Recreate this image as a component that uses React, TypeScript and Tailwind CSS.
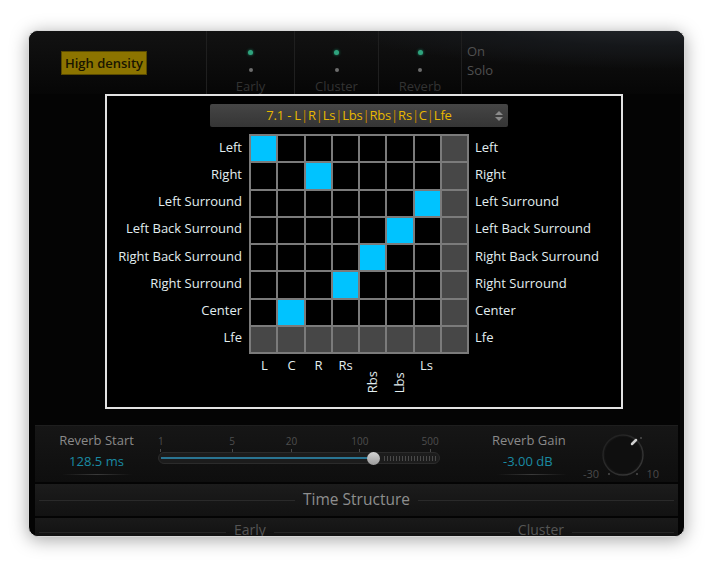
import React from 'react'

const ROWS = ['Left', 'Right', 'Left Surround', 'Left Back Surround', 'Right Back Surround', 'Right Surround', 'Center', 'Lfe']
// column index of the lit cell for each row, -1 for none
const ACTIVE = [0, 2, 6, 5, 4, 3, 1, -1]
const COLS = ['L', 'C', 'R', 'Rs', 'Rbs', 'Lbs', 'Ls', '']
const ROTATED = ['Rbs', 'Lbs']
const FORMAT = ['L', 'R', 'Ls', 'Lbs', 'Rbs', 'Rs', 'C', 'Lfe']

const font = { fontFamily: '"Open Sans", "Noto Sans", sans-serif' }

function Led({ on }: { on: boolean }) {
  return on ? (
    <span className="block w-[5px] h-[5px] rounded-full bg-[#2fa37e] shadow-[0_0_3px_#1f8f6a]" />
  ) : (
    <span className="block w-[4px] h-[4px] rounded-full bg-[#6d6d6d]" />
  )
}

function LedColumn({ label, width }: { label: string; width: string }) {
  return (
    <div className={`${width} h-full border-l border-[#1f1f1f] flex flex-col items-center pt-[19px]`}>
      <Led on />
      <div className="h-[13px]" />
      <Led on={false} />
      <div className="mt-[8px] text-[13px] leading-none text-[#333]">{label}</div>
    </div>
  )
}

function Matrix() {
  return (
    <div className="w-[220px] h-[220px] grid grid-cols-8 grid-rows-8 gap-[2px] p-[2px] bg-[#7b7b7b]">
      {ROWS.map((_, r) =>
        COLS.map((_, c) => {
          const lit = ACTIVE[r] === c
          const dead = r === 7 || c === 7
          return (
            <div
              key={`${r}-${c}`}
              className={lit ? 'bg-[#00c3ff]' : dead ? 'bg-[#474747]' : 'bg-black'}
            />
          )
        })
      )}
    </div>
  )
}

function Dialog() {
  return (
    <div className="ml-[76px] w-[518px] h-[315px] border-2 border-[#e2e2e2] bg-black flex flex-col">
      <div className="ml-[103px] mt-[8px] w-[298px] h-[23px] rounded-[2px] bg-gradient-to-b from-[#454545] to-[#353535] flex items-center pl-[18px]">
        <div className="flex-1 text-center text-[13px] leading-none tracking-[-0.2px] text-[#e8b800]">
          7.1 -{' '}
          {FORMAT.map((f, i) => (
            <span key={f}>
              {f}
              {i < FORMAT.length - 1 && <span className="text-[#c98a00]">|</span>}
            </span>
          ))}
        </div>
        <div className="w-[18px] flex flex-col items-center gap-[2px]">
          <span className="w-0 h-0 border-l-[4px] border-r-[4px] border-b-[4px] border-l-transparent border-r-transparent border-b-[#8a8a8a]" />
          <span className="w-0 h-0 border-l-[4px] border-r-[4px] border-t-[4px] border-l-transparent border-r-transparent border-t-[#8a8a8a]" />
        </div>
      </div>

      <div className="mt-[7px] flex">
        <div className="w-[135px] h-[220px] grid grid-rows-8 pb-[3px]">
          {ROWS.map((r) => (
            <div key={r} className="flex items-center justify-end text-[13px] text-[#e2eef0] leading-none">
              {r}
            </div>
          ))}
        </div>
        <div className="ml-[7px]">
          <Matrix />
          <div className="grid grid-cols-8 w-[220px] px-[2px] pt-[5px]">
            {COLS.map((c, i) =>
              ROTATED.includes(c) ? (
                <div key={i} className="flex justify-center pt-[12px]">
                  <span className="[writing-mode:vertical-rl] rotate-180 text-[13px] leading-none text-[#e2eef0]">{c}</span>
                </div>
              ) : (
                <div key={i} className="text-center text-[13px] leading-none text-[#e2eef0]">{c}</div>
              )
            )}
          </div>
        </div>
        <div className="ml-[6px] h-[220px] grid grid-rows-8 pb-[3px]">
          {ROWS.map((r) => (
            <div key={r} className="flex items-center text-[13px] text-[#e2eef0] leading-none">
              {r}
            </div>
          ))}
        </div>
      </div>
    </div>
  )
}

function Tick({ t }: { t: string }) {
  return (
    <div className="w-[20px] flex flex-col items-center">
      <span>{t}</span>
      <span className="mt-[3px] w-px h-[3px] bg-[#4a4a4a]" />
    </div>
  )
}

function Slider() {
  return (
    <div className="w-[282px] pt-[10px]">
      <div className="flex h-[16px] text-[10px] leading-none text-[#4e4e4e]">
        <div className="-ml-[7px]" />
        <Tick t="1" />
        <div className="w-[52px]" />
        <Tick t="5" />
        <div className="w-[40px]" />
        <Tick t="20" />
        <div className="w-[49px]" />
        <Tick t="100" />
        <div className="w-[51px]" />
        <Tick t="500" />
      </div>
      <div className="h-[12px] rounded-full bg-[#1c1c1c] border border-[#2b2b2b] flex items-center px-[2px]">
        <div className="w-[207px] h-[2px] bg-[#2a7593]" />
        <div className="w-[13px] h-[13px] -ml-[1px] rounded-full bg-gradient-to-b from-[#d4d4d4] to-[#9a9a9a]" />
        <div className="ml-[4px] flex-1 h-[5px] bg-[repeating-linear-gradient(90deg,#4a4a4a_0px,#4a4a4a_1px,transparent_1px,transparent_3px)]" />
      </div>
    </div>
  )
}

function Knob() {
  return (
    <div className="w-[80px] pt-[8px]">
      <svg width="56" height="50" viewBox="0 0 56 50" className="ml-[12px]">
        <defs>
          <linearGradient id="rim" x1="0" y1="0" x2="1" y2="1">
            <stop offset="0" stopColor="#1e1e1e" />
            <stop offset="1" stopColor="#3a3a3a" />
          </linearGradient>
        </defs>
        <circle cx="28" cy="21" r="20" fill="#141414" stroke="url(#rim)" strokeWidth="1.4" />
        <circle cx="28" cy="21" r="18" fill="#0f0f0f" />
        <line x1="37" y1="10" x2="41" y2="6" stroke="#d0d0d0" strokeWidth="2.5" strokeLinecap="round" />
        <circle cx="46" cy="4" r="0.8" fill="#777" />
        <circle cx="14" cy="40" r="0.8" fill="#777" />
        <circle cx="42" cy="40" r="0.8" fill="#777" />
      </svg>
      <div className="-mt-[16px] w-[76px] flex justify-between text-[11px] leading-none text-[#4a4a4a]">
        <span>-30</span>
        <span>10</span>
      </div>
    </div>
  )
}

export default function App() {
  return (
    <div className="w-[713px] h-[569px] bg-white pt-[30px] pl-[28px]" style={font}>
      <div className="w-[657px] h-[507px] rounded-[10px] overflow-hidden bg-[#040404] border border-[#d8d8d8] shadow-[0_3px_18px_rgba(0,0,0,0.35)] flex flex-col">
        {/* top bar */}
        <div className="h-[63px] shrink-0 flex bg-[radial-gradient(ellipse_70%_120%_at_95%_-30%,#2c3035_0%,#15171a_45%,transparent_75%),linear-gradient(#121212,#060606)] overflow-hidden">
          <div className="w-[177px] pl-[32px] pt-[20px]">
            <div className="w-[86px] h-[24px] bg-[#8c7400] border border-[#5a4b00] flex items-center justify-center text-[13px] font-semibold leading-none text-[#191600]">
              High density
            </div>
          </div>
          <LedColumn label="Early" width="w-[88px]" />
          <LedColumn label="Cluster" width="w-[84px]" />
          <LedColumn label="Reverb" width="w-[83px]" />
          <div className="border-l border-[#1f1f1f] pl-[5px] pt-[14px] flex flex-col gap-[6px] text-[13px] leading-none text-[#505050]">
            <span>On</span>
            <span>Solo</span>
          </div>
        </div>

        {/* output matrix */}
        <div className="h-[331px] shrink-0">
          <Dialog />
        </div>

        {/* reverb controls */}
        <div className="h-[57px] shrink-0 mx-[6px] border-t border-[#1e1e1e] bg-gradient-to-b from-[#161616] to-[#0e0e0e] flex">
          <div className="w-[123px] flex flex-col items-center pt-[8px]">
            <div className="text-[13px] leading-none text-[#8a8a8a]">Reverb Start</div>
            <div className="mt-[8px] text-[13px] leading-none text-[#1a8aa3]">128.5 ms</div>
            <div className="mt-[6px] w-[70px] h-px bg-gradient-to-r from-transparent via-[#3a3a3a] to-transparent" />
          </div>
          <Slider />
          <div className="w-[52px]" />
          <div className="w-[91px] pt-[8px] whitespace-nowrap">
            <div className="text-[13px] leading-none text-[#8a8a8a]">Reverb Gain</div>
            <div className="mt-[8px] ml-[11px] text-[13px] leading-none text-[#1a8aa3]">-3.00 dB</div>
            <div className="mt-[6px] ml-[5px] w-[70px] h-px bg-gradient-to-r from-transparent via-[#3a3a3a] to-transparent" />
          </div>
          <Knob />
        </div>

        <div className="h-[2px] shrink-0" />
        <div className="h-[32px] shrink-0 mx-[6px] bg-gradient-to-b from-[#1c1c1c] to-[#121212] flex items-center gap-[8px] px-[4px]">
          <div className="flex-1 h-px bg-[#2a2a2a]" />
          <span className="text-[15.5px] text-[#8e8e8e] leading-none">Time Structure</span>
          <div className="flex-1 h-px bg-[#2a2a2a]" />
        </div>
        <div className="h-[2px] shrink-0" />
        <div className="h-[20px] mx-[6px] bg-gradient-to-b from-[#1a1a1a] to-[#121212] flex items-start pt-[5px] px-[4px] gap-[8px] overflow-hidden">
          <div className="w-[187px] h-px mt-[9px] bg-[#262626]" />
          <span className="text-[14px] leading-none text-[#555]">Early</span>
          <div className="w-[236px] h-px mt-[9px] bg-[#262626]" />
          <span className="text-[14px] leading-none text-[#555]">Cluster</span>
          <div className="flex-1 h-px mt-[9px] bg-[#262626]" />
        </div>
      </div>
    </div>
  )
}
